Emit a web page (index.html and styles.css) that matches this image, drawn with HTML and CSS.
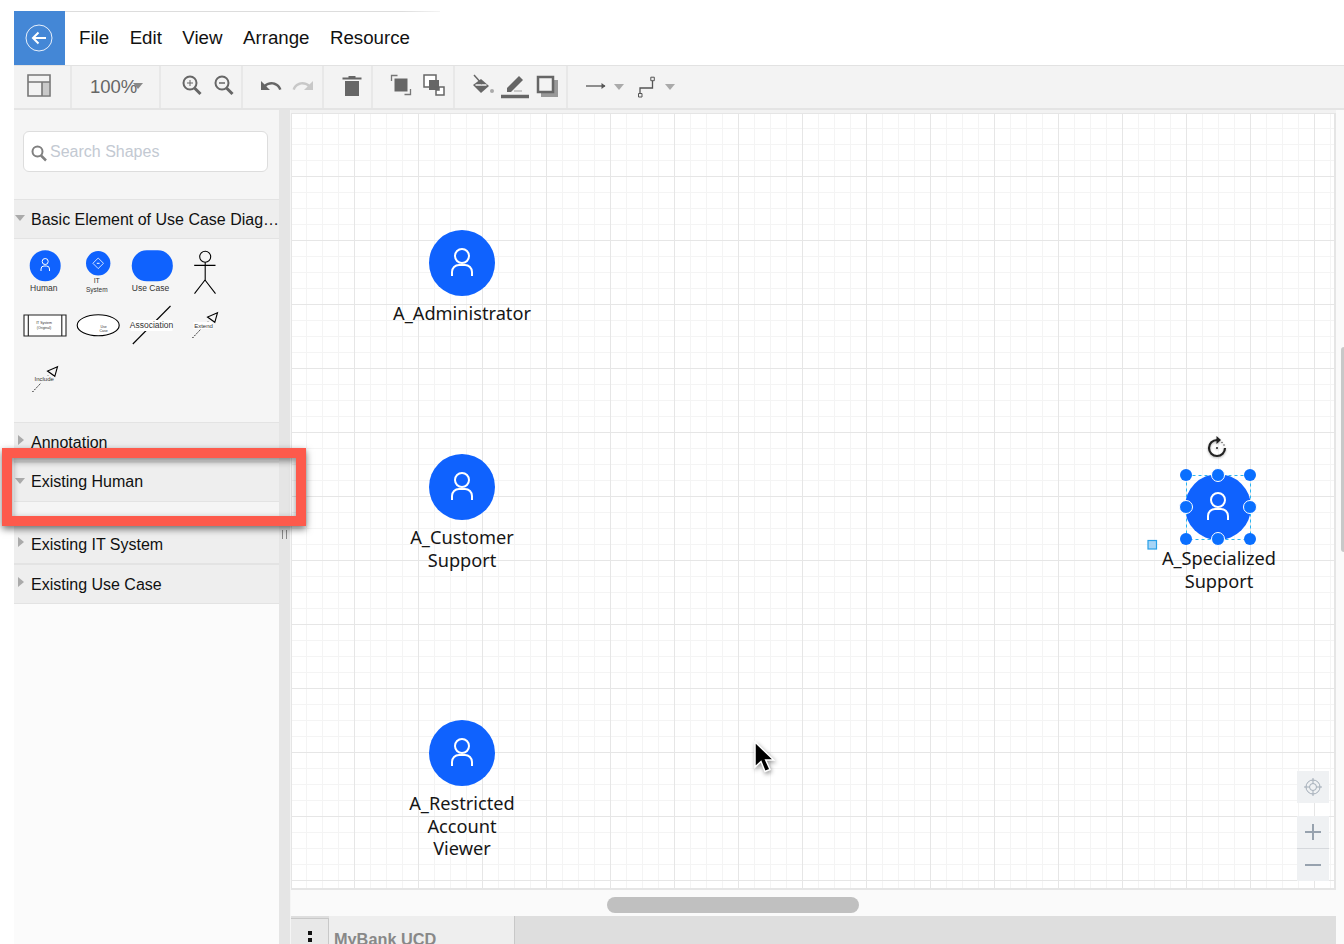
FILE: index.html
```html
<!DOCTYPE html>
<html lang="en">
<head>
<meta charset="utf-8">
<title>MyBank UCD</title>
<link rel="stylesheet" href="styles.css">
</head>
<body>
<svg class="defs" width="0" height="0" aria-hidden="true">
  <symbol id="person" viewBox="0 0 66 66">
    <circle cx="33" cy="33" r="33" fill="#0f62fe"/>
    <circle cx="33" cy="26" r="7" fill="none" stroke="#fff" stroke-width="2"/>
    <path d="M23 46v-4a7 7 0 0 1 7-7h6a7 7 0 0 1 7 7v4" fill="none" stroke="#fff" stroke-width="2"/>
  </symbol>
</svg>
<div class="app">
  <header class="menubar">
    <div class="back">
      <svg width="30" height="30" viewBox="0 0 30 30"><circle cx="15" cy="15" r="13" fill="none" stroke="#e8f0fb" stroke-width="1"/><path d="M22 15H9M14.500 9.500 9 15l5.500 5.500" fill="none" stroke="#fff" stroke-width="2"/></svg>
    </div>
    <nav class="menu"><span>File</span><span>Edit</span><span>View</span><span>Arrange</span><span>Resource</span></nav>
  </header>
  <div class="toolbar">
    <div class="tg tg1">
      <svg class="ic" width="24" height="24" viewBox="0 0 24 24"><path d="M15 9h7v13h-7z" fill="#c9c9c9"/><path d="M1 2h22v21H1zM1 9h22M15 9v14" fill="none" stroke="#777" stroke-width="1.600"/></svg>
    </div>
    <div class="tg tg2"><span class="zoomval">100%</span><i class="caret over"></i></div>
    <div class="tg tg3">
      <svg width="24" height="24" viewBox="0 0 24 24"><circle cx="10" cy="10" r="6.500" fill="none" stroke="#666" stroke-width="2"/><path d="M14.500 15l6 6" stroke="#666" stroke-width="3"/><path d="M7 10h6M10 7v6" stroke="#666" stroke-width="1"/></svg>
      <svg width="24" height="24" viewBox="0 0 24 24"><circle cx="10" cy="10" r="6.500" fill="none" stroke="#666" stroke-width="2"/><path d="M14.500 15l6 6" stroke="#666" stroke-width="3"/><path d="M7 10h6" stroke="#666" stroke-width="1.500"/></svg>
    </div>
    <div class="tg tg4">
      <svg width="24" height="24" viewBox="0 0 24 24"><path fill="#666" d="M12.500 8c-2.650 0-5.050.99-6.900 2.600L2 7v9h9l-3.620-3.620c1.390-1.160 3.160-1.880 5.120-1.880 3.540 0 6.550 2.310 7.600 5.500l2.370-.78C21.080 11.030 17.150 8 12.500 8z"/></svg>
      <svg width="24" height="24" viewBox="0 0 24 24"><path fill="#c8c8c8" d="M18.400 10.600C16.550 8.990 14.150 8 11.500 8c-4.650 0-8.580 3.030-9.960 7.220L3.900 16c1.050-3.190 4.050-5.500 7.600-5.500 1.950 0 3.730.72 5.120 1.880L13 16h9V7l-3.600 3.600z"/></svg>
    </div>
    <div class="tg tg5">
      <svg width="24" height="24" viewBox="0 0 24 24"><path fill="#666" d="M5 7h14v15H5zM2.500 3.500h6V2h7v1.500h6v2h-19z"/></svg>
    </div>
    <div class="tg tg6">
      <svg width="24" height="24" viewBox="0 0 24 24"><path d="M2.500 8V2.500h6M15.500 21.500h6V16" fill="none" stroke="#777" stroke-width="1.300"/><path d="M5.500 5.500h13v13h-13z" fill="#666"/></svg>
      <svg width="24" height="24" viewBox="0 0 24 24"><path d="M2 2h12v12H2z" fill="#fff" stroke="#666" stroke-width="1.500"/><path d="M7 7h10v10H7z" fill="#666"/><path d="M12 14h10v8H14v-5h3v-3z" fill="#fff" stroke="#666" stroke-width="1.500"/></svg>
    </div>
    <div class="tg tg7">
      <svg width="26" height="26" viewBox="0 0 26 26"><path d="M3 12 11 6l8 7-8 7z" fill="#666"/><path d="M5.500 12h11" stroke="#f3f3f3" stroke-width="1.500"/><path d="M4 2l8 9" stroke="#666" stroke-width="1.500"/><circle cx="22" cy="18" r="2" fill="#aaa"/></svg>
      <svg width="30" height="30" viewBox="0 0 30 30"><path d="M7 17 19 5l4 4-12 12H7z" fill="#666"/><path d="M14 20h8" stroke="#bbb" stroke-width="1.500"/><path d="M1 25.500h28" stroke="#666" stroke-width="3.500"/></svg>
      <svg class="s-shadow" width="22" height="22" viewBox="0 0 22 22"><path d="M5 5h17v17H5z" fill="#999"/><path d="M2 2h15v15H2z" fill="#f3f3f3" stroke="#666" stroke-width="2.500"/></svg>
    </div>
    <div class="tg tg8">
      <svg class="s-arrow" width="22" height="12" viewBox="0 0 22 12"><path d="M1 6h19" stroke="#555" stroke-width="1.300"/><path d="M16.500 3l4 3-4 3z" fill="#555"/></svg>
      <i class="caret"></i>
      <svg class="s-way" width="22" height="22" viewBox="0 0 22 22"><path d="M2 19v-7h12.500V3" fill="none" stroke="#555" stroke-width="1.300"/><path d="M.5 17.500h3.500V21H.5zM12.800 1.200h3.500v3.500h-3.500z" fill="#eee" stroke="#555"/></svg>
      <i class="caret c2"></i>
    </div>
  </div>
  <div class="main">
    <aside class="sidebar">
      <div class="searchbox">
        <div class="search">
          <svg width="18" height="18" viewBox="0 0 18 18"><circle cx="7.500" cy="7.500" r="5" fill="none" stroke="#808080" stroke-width="2"/><path d="M11 11.500l5 5" stroke="#808080" stroke-width="2.500"/></svg>
          <span>Search Shapes</span>
        </div>
      </div>
      <div class="sec"><i class="tri down"></i><span class="sec-title">Basic Element of Use Case Diag…</span></div>
      <div class="palette">
        <svg class="pal-ic" width="53" height="53" viewBox="19.500 246 53 53"><circle cx="45.700" cy="265.700" r="15.500" fill="#0f62fe"/><circle cx="45.700" cy="261.500" r="3" fill="none" stroke="#fff"/><path d="M41.500 271v-2a3 3 0 0 1 3-3h2.500a3 3 0 0 1 3 3v2" fill="none" stroke="#fff"/><text x="44.300" y="291" class="t85">Human</text></svg>
        <svg class="pal-ic" width="53" height="53" viewBox="72.500 246 53 53"><circle cx="98.700" cy="263.300" r="12.200" fill="#0f62fe"/><path d="M98.700 258l5.300 5.300-5.300 5.300-5.300-5.300z" fill="none" stroke="#fff" stroke-width=".8"/><path d="M97.300 263.300h2.800" stroke="#fff"/><text x="97.300" y="283" class="t7">IT</text><text x="97.300" y="292" class="t65">System</text></svg>
        <svg class="pal-ic" width="53" height="53" viewBox="125.500 246 53 53"><rect x="132.300" y="250.300" width="41" height="31" rx="15" fill="#0f62fe"/><text x="151" y="291" class="t85">Use Case</text></svg>
        <svg class="pal-ic" width="53" height="53" viewBox="178.500 246 53 53"><g fill="none" stroke="#000" stroke-width="1.100"><circle cx="205.700" cy="256.700" r="5.500"/><path d="M205.700 262.200V280M194.700 265.400H216M205.500 280l-10.500 13.700M205.500 280l10.500 13.700"/></g></svg>
        <svg class="pal-ic" width="53" height="53" viewBox="19.500 299 53 53"><path d="M24.500 315h42v21h-42zM28.800 315v21M62.300 315v21" fill="#fff" stroke="#222" stroke-width="1.100"/><text x="44.500" y="324" class="t4">IT System</text><text x="44.500" y="329" class="t4">(Original)</text></svg>
        <svg class="pal-ic" width="53" height="53" viewBox="72.500 299 53 53"><ellipse cx="98.700" cy="325.300" rx="21" ry="10.500" fill="#fff" stroke="#000" stroke-width="1.100"/><text x="104" y="328" class="t4">Use</text><text x="104" y="332" class="t4">Case</text></svg>
        <svg class="pal-ic" width="53" height="53" viewBox="125.500 299 53 53"><path d="M133.300 344 171 306" stroke="#000" stroke-width="1.100"/><rect x="131" y="320" width="42" height="11" fill="#fff"/><text x="152" y="328" class="t85">Association</text></svg>
        <svg class="pal-ic" width="53" height="53" viewBox="178.500 299 53 53"><path d="M193 338 209 321" stroke="#000" stroke-dasharray="1.500 1.500"/><path d="M218 312.700l-10 4.300 7.300 5.300z" fill="none" stroke="#000" stroke-width="1.100"/><rect x="194" y="322" width="19" height="7" fill="#fff"/><text x="204" y="327.500" class="t6">Extend</text></svg>
        <svg class="pal-ic" width="53" height="53" viewBox="19.500 352 53 53"><path d="M33 392 49 375" stroke="#000" stroke-dasharray="1.500 1.500"/><path d="M58 366.700l-10 4.300 7.300 5.300z" fill="none" stroke="#000" stroke-width="1.100"/><rect x="35" y="376" width="19" height="7" fill="#f5f5f5"/><text x="44.700" y="381" class="t6">Include</text></svg>
      </div>
      <div class="sec"><i class="tri"></i><span class="sec-title">Annotation</span></div>
      <div class="sec sec-h"><i class="tri down"></i><span class="sec-title">Existing Human</span></div>
      <div class="empty"></div>
      <div class="sec"><i class="tri"></i><span class="sec-title">Existing IT System</span></div>
      <div class="sec"><i class="tri"></i><span class="sec-title">Existing Use Case</span></div>
    </aside>
    <div class="divider"><i class="grip"></i></div>
    <section class="workspace">
      <div class="canvas">
        <div class="node n1"><svg width="66" height="66"><use href="#person"/></svg><div class="label">A_Administrator</div></div>
        <div class="node n2"><svg width="66" height="66"><use href="#person"/></svg><div class="label">A_Customer<br>Support</div></div>
        <div class="node n3"><svg width="66" height="66"><use href="#person"/></svg><div class="label">A_Restricted<br>Account<br>Viewer</div></div>
        <div class="node n4"><svg width="66" height="66"><use href="#person"/></svg><div class="label">A_Specialized<br>Support</div></div>
        <svg class="selection" width="115" height="130" viewBox="-5 0 115 130">
          <path d="M35.500 45.500h64v64h-64z" fill="none" stroke="#29b6f2" stroke-dasharray="3 3"/>
          <g fill="#0a6fff">
            <circle cx="35" cy="45" r="6"/><circle cx="99" cy="45" r="6"/>
            <circle cx="35" cy="109" r="6"/><circle cx="99" cy="109" r="6"/>
          </g>
          <g fill="#0a6fff" stroke="#fff" stroke-width="1">
            <circle cx="67" cy="45" r="6.500"/>
            <circle cx="35" cy="77" r="6.500"/><circle cx="99" cy="77" r="6.500"/>
            <circle cx="67" cy="109" r="6.500"/>
          </g>
          <rect x="-3" y="110.500" width="8.500" height="8.500" fill="#a6d4f6" stroke="#29a0e8" stroke-width="1.200"/>
          <g class="rotate">
            <path d="M66 10a8 8 0 1 0 8 8" fill="none" stroke="#222" stroke-width="2.200"/>
            <path d="M65.500 6l4.500 4-4.500 4z" fill="#222"/>
            <circle cx="66" cy="18" r="1" fill="#222"/>
            <circle cx="71" cy="12.500" r=".7" fill="#444"/>
            <circle cx="73" cy="15" r=".7" fill="#444"/>
          </g>
        </svg>
        <div class="controls">
          <div class="ctl ctl-target">
            <svg width="18" height="18" viewBox="0 0 18 18"><g fill="none" stroke="#a3adb8"><circle cx="9" cy="9" r="7"/><circle cx="9" cy="9" r="3.500"/><path d="M9 0v5M9 13v5M0 9h5M13 9h5"/></g></svg>
          </div>
          <div class="zoombtns">
            <div class="ctl ctl-plus"><svg width="18" height="18" viewBox="0 0 18 18"><path d="M1 9h16M9 1v16" stroke="#97a2ae" stroke-width="2"/></svg></div>
            <div class="ctl ctl-minus"><svg width="18" height="18" viewBox="0 0 18 18"><path d="M1 9h16" stroke="#97a2ae" stroke-width="2"/></svg></div>
          </div>
        </div>
        <svg class="cursor" width="28" height="38" viewBox="0 0 28 38"><path d="M3 1v25l6-5.500 4 10 5-2-4.300-9.500h8z" fill="#000" stroke="#fff" stroke-width="1.500"/></svg>
      </div>
      <div class="hscroll"><i class="thumb"></i></div>
      <div class="tabs">
        <div class="tabmenu"><i></i><i></i><i></i></div>
        <div class="tab">MyBank UCD</div>
      </div>
    </section>
    <div class="rightrail"><i class="vthumb"></i></div>
  </div>
  <div class="callout"></div>
</div>
</body>
</html>
```
FILE: styles.css
```css
* { box-sizing: border-box; }
html, body { margin: 0; height: 100%; background: #fff; overflow: hidden; }
body { font-family: "Liberation Sans", Arial, sans-serif; color: #000; }
.defs { position: absolute; }
.app { position: relative; width: 1344px; height: 944px; padding: 11px 0 0 14px; display: flex; flex-direction: column; overflow: hidden; }
.app::before { content: ""; position: absolute; left: 65px; top: 11px; width: 375px; height: 1px; background: linear-gradient(to right, #ddd 90%, #f4f4f4); }

.menubar { height: 55px; display: flex; border-bottom: 1px solid #e2e2e2; background: #fff; flex: none; }
.back { width: 51px; height: 54px; background: #4487d6; display: flex; align-items: center; justify-content: center; }
.back svg { margin-left: -2px; }
.menu { display: flex; align-items: center; gap: 20.500px; padding-left: 14px; font-size: 18.700px; color: #111; }

.toolbar { height: 44px; flex: none; margin-right: 0; display: flex; background: #f3f3f3; border-bottom: 2px solid #e4e4e4; }
.tg { display: flex; align-items: center; border-right: 2px solid #e8e8e8; }
.tg1 { width: 58px; padding-left: 13px; }
.tg1 svg { margin-top: -4px; }
.tg2 { width: 89px; padding-left: 18px; position: relative; }
.zoomval { font-size: 18.500px; color: #666; }
.tg3 { width: 82px; padding: 0 0 0 19px; gap: 8px; }
.tg3 svg { margin-top: -4px; }
.tg4 { width: 81px; padding-left: 16px; gap: 8px; }
.tg4 svg { margin-top: -3px; }
.tg5 { width: 49px; padding-left: 16px; }
.tg5 svg { margin-top: -3px; }
.tg6 { width: 82px; padding-left: 16px; gap: 9px; }
.tg6 svg { margin-top: -4px; }
.tg7 { width: 113px; padding-left: 15px; gap: 4px; }
.tg7 svg { margin-top: -2px; }
.tg7 .s-shadow { margin-left: 2px; margin-top: -3px; }
.tg8 { border: 0; padding-left: 17px; }
.s-arrow { margin-top: -3px; }
.s-way { margin-top: -1px; margin-left: 14px; }
.caret { width: 0; height: 0; border: 5px solid transparent; border-top: 6px solid #aaa; border-bottom: 0; margin-left: 7px; }
.caret.c2 { margin-left: 5px; }
.caret.over { position: absolute; left: 61px; top: 17px; margin: 0; border-top-color: #888; }

.main { flex: 1; min-height: 0; display: flex; }
.sidebar { width: 265px; flex: none; background: #fbfbfb; }
.searchbox { height: 89px; padding: 21px 11px 0 9px; background: #f5f5f5; }
.search { height: 41px; background: #fff; border: 1px solid #ddd; border-radius: 6px; display: flex; align-items: center; padding-left: 6px; gap: 2px; font-size: 16px; color: #c3c9d2; }
.search svg { margin-top: 3px; }
.sec { height: 40px; padding: 2px 0 0 17px; background: #eee; border-top: 1px solid #e3e3e3; border-bottom: 1px solid #e3e3e3; display: flex; align-items: center; font-size: 16px; position: relative; }
.sec-h { padding-top: 0; }
.sec-title { white-space: nowrap; color: #111; }
.tri { position: absolute; left: 4px; top: 12px; width: 0; height: 0; border: 5px solid transparent; border-left: 6px solid #aaa; border-right: 0; }
.tri.down { left: 1px; top: 15px; border: 5px solid transparent; border-top: 6px solid #aaa; border-bottom: 0; }
.palette { height: 183px; background: #f5f5f5; padding: 7px 0 0 5px; display: grid; grid-template-columns: repeat(4, 53px); grid-auto-rows: 53px; }
.pal-ic { display: block; }
.pal-ic text { text-anchor: middle; fill: #333; font-family: "Liberation Sans", Arial, sans-serif; }
.t85 { font-size: 8.500px; }
.t7 { font-size: 7px; }
.t65 { font-size: 6.500px; }
.t6 { font-size: 6px; }
.t4 { font-size: 3.500px; }
.empty { height: 22px; background: #f5f5f5; }

.divider { width: 12px; flex: none; background: #e5e5e5; position: relative; border-right: 1px solid #f5f5f5; }
.grip { position: absolute; left: 3px; top: 420px; width: 5px; height: 9px; border-left: 1px solid #888; border-right: 1px solid #888; }

.workspace { flex: none; width: 1045px; display: flex; flex-direction: column; padding-top: 3px; background: #f2f2f2; }
.canvas {
  position: relative; width: 1045px; height: 777px; flex: none; overflow: hidden; background-color: #fff; border: 1px solid #e5e5e5; border-width: 1px 2px 2px 1px;
  background-image:
    linear-gradient(to right, #e6e6e6 1px, transparent 1px),
    linear-gradient(to bottom, #e6e6e6 1px, transparent 1px),
    linear-gradient(to right, #f4f4f4 1px, transparent 1px),
    linear-gradient(to bottom, #f4f4f4 1px, transparent 1px);
  background-size: 64px 64px, 64px 64px, 16px 16px, 16px 16px;
  background-position: 62px 0, 0 62px, 14px 0, 0 14px;
}
.node { position: absolute; width: 180px; display: flex; flex-direction: column; align-items: center; }
.node svg { display: block; flex: none; }
.n1 { left: 80px; top: 116px; }
.n2 { left: 80px; top: 340px; }
.n3 { left: 80px; top: 606px; }
.n4 { left: 836px; top: 360px; }
.label { margin-top: 6px; font-family: "Noto Sans", sans-serif; font-size: 18.200px; line-height: 22.500px; text-align: center; color: #161616; }
.n4 .label { margin: 7px 0 0 2px; }
.selection { position: absolute; left: 854px; top: 316px; }
.rotate { filter: drop-shadow(0 1px 1px rgba(0,0,0,.3)); }
.controls { position: absolute; left: 1005px; top: 657px; display: flex; flex-direction: column; gap: 13px; }
.ctl { width: 32px; height: 32px; background: #eff1f3; display: flex; align-items: center; justify-content: center; }
.ctl-plus { border-bottom: 1px solid #d5d8dc; height: 33px; }
.cursor { position: absolute; left: 460px; top: 627px; filter: drop-shadow(1px 2px 2px rgba(0,0,0,.4)); }

.hscroll { height: 26px; flex: none; background: #fafafa; position: relative; }
.thumb { position: absolute; left: 316px; top: 7px; width: 252px; height: 16px; border-radius: 8px; background: #c0c0c0; }
.tabs { flex: 1; min-height: 0; display: flex; background: #dedede; overflow: hidden; margin-left: -2px; padding-top: 0; }
.tabmenu { width: 40px; background: #e8e8e8; border: 1px solid #c8c8c8; border-bottom: 0; margin-top: 2px; padding: 12px 0 0 1px; display: flex; flex-direction: column; align-items: center; gap: 3px; }
.tabmenu i { width: 4px; height: 4px; background: #111; flex: none; }
.tab { width: 186px; background: #eee; border-right: 1px solid #c8c8c8; padding: 14px 0 0 5px; font-size: 16.300px; font-weight: 700; color: #888; line-height: 18px; white-space: nowrap; }
.rightrail { flex: 1; background: #fafafa; position: relative; }
.vthumb { position: absolute; right: 0; top: 237px; width: 3px; height: 205px; background: #c8c8c8; border-radius: 3px 0 0 3px; }

.callout { position: absolute; left: 2px; top: 448px; width: 304px; height: 78px; border: 10.500px solid #fd5a4c; box-shadow: 0 3px 7px rgba(0,0,0,.55), inset 0 3px 7px rgba(0,0,0,.45); pointer-events: none; }
```
